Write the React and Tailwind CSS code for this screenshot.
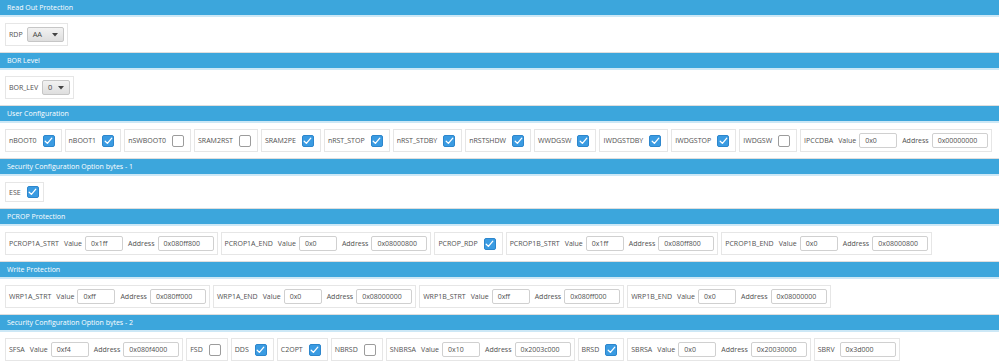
import React from 'react'

const font = { fontFamily: '"Open Sans", "Noto Sans", sans-serif' }

function Header({ title }) {
  return (
    <div className="h-[15px] bg-[#3ca6dc] border-b-2 border-[#cde8f6] box-content flex items-center px-[7px] text-white text-[7px] leading-none">
      {title}
    </div>
  )
}

function Section({ title, children }) {
  return (
    <div>
      <Header title={title} />
      <div className="flex gap-[3px] px-[5px] py-[6px] border-b border-[#dedede] bg-white">
        {children}
      </div>
    </div>
  )
}

function Box({ children, className = '' }) {
  return (
    <div className={`flex items-center border border-[#e6e6e6] pl-[3px] pr-[3px] ${className}`}>
      {children}
    </div>
  )
}

function Check({ on }) {
  return on ? (
    <span className="w-[12px] h-[12px] rounded-[2px] bg-[#3a9be2] border border-[#2d86cc] flex items-center justify-center">
      <svg width="9" height="8" viewBox="0 0 9 8" fill="none">
        <path d="M1.2 4.2L3.4 6.4L7.8 1.2" stroke="white" strokeWidth="1.3" strokeLinecap="round" strokeLinejoin="round" />
      </svg>
    </span>
  ) : (
    <span className="w-[12px] h-[12px] rounded-[2px] bg-white border border-[#9c9c9c]" />
  )
}

function CheckItem({ label, on }) {
  return (
    <Box className="gap-[6px] pr-[6px]">
      <span className="text-[#505050] text-[7px] leading-none">{label}</span>
      <Check on={on} />
    </Box>
  )
}

function Input({ value, w }) {
  return (
    <span className={`${w} h-[15px] border border-[#d0d0d0] rounded-[2px] bg-white flex items-center px-[5px] text-[#505050] text-[7px] leading-none`}>
      {value}
    </span>
  )
}

function ValueItem({ label, value, address }) {
  return (
    <Box className="py-[3px]">
      <span className="text-[#505050] text-[7px] leading-none">{label}</span>
      <span className="ml-[5px] mr-[3px] text-[#505050] text-[7px] leading-none">Value</span>
      <Input value={value} w="w-[38px]" />
      {address !== undefined && (
        <>
          <span className="ml-[5px] mr-[3px] text-[#505050] text-[7px] leading-none">Address</span>
          <Input value={address} w="w-[56px]" />
        </>
      )}
    </Box>
  )
}

function SelectItem({ label, value, w }) {
  return (
    <Box className="py-[3px]">
      <span className="text-[#505050] text-[7px] leading-none mr-[4px]">{label}</span>
      <span className={`${w} h-[15px] border border-[#c6c6c6] rounded-[2px] bg-gradient-to-b from-[#f2f2f2] to-[#dedede] flex items-center justify-between px-[5px] text-[#444] text-[7.5px] leading-none`}>
        {value}
        <svg width="6" height="4" viewBox="0 0 6 4"><path d="M0 0H6L3 3.5Z" fill="#444" /></svg>
      </span>
    </Box>
  )
}

export default function App() {
  return (
    <div className="w-[999px] h-[363px] overflow-hidden bg-white" style={font}>
      <Section title="Read Out Protection">
        <SelectItem label="RDP" value="AA" w="w-[37px]" />
      </Section>
      <Section title="BOR Level">
        <SelectItem label="BOR_LEV" value="0" w="w-[28px]" />
      </Section>
      <Section title="User Configuration">
        <CheckItem label="nBOOT0" on />
        <CheckItem label="nBOOT1" on />
        <CheckItem label="nSWBOOT0" />
        <CheckItem label="SRAM2RST" />
        <CheckItem label="SRAM2PE" on />
        <CheckItem label="nRST_STOP" on />
        <CheckItem label="nRST_STDBY" on />
        <CheckItem label="nRSTSHDW" on />
        <CheckItem label="WWDGSW" on />
        <CheckItem label="IWDGSTDBY" on />
        <CheckItem label="IWDGSTOP" on />
        <CheckItem label="IWDGSW" />
        <ValueItem label="IPCCDBA" value="0x0" address="0x00000000" />
      </Section>
      <Section title="Security Configuration Option bytes - 1">
        <Box className="gap-[6px] pr-[4px] py-[3px]">
          <span className="text-[#505050] text-[7px] leading-none">ESE</span>
          <Check on />
        </Box>
      </Section>
      <Section title="PCROP Protection">
        <ValueItem label="PCROP1A_STRT" value="0x1ff" address="0x080ff800" />
        <ValueItem label="PCROP1A_END" value="0x0" address="0x08000800" />
        <CheckItem label="PCROP_RDP" on />
        <ValueItem label="PCROP1B_STRT" value="0x1ff" address="0x080ff800" />
        <ValueItem label="PCROP1B_END" value="0x0" address="0x08000800" />
      </Section>
      <Section title="Write Protection">
        <ValueItem label="WRP1A_STRT" value="0xff" address="0x080ff000" />
        <ValueItem label="WRP1A_END" value="0x0" address="0x08000000" />
        <ValueItem label="WRP1B_STRT" value="0xff" address="0x080ff000" />
        <ValueItem label="WRP1B_END" value="0x0" address="0x08000000" />
      </Section>
      <Section title="Security Configuration Option bytes - 2">
        <ValueItem label="SFSA" value="0xf4" address="0x080f4000" />
        <CheckItem label="FSD" />
        <CheckItem label="DDS" on />
        <CheckItem label="C2OPT" on />
        <CheckItem label="NBRSD" />
        <ValueItem label="SNBRSA" value="0x10" address="0x2003c000" />
        <CheckItem label="BRSD" on />
        <ValueItem label="SBRSA" value="0x0" address="0x20030000" />
        <Box className="py-[3px]">
          <span className="text-[#505050] text-[7px] leading-none mr-[5px]">SBRV</span>
          <Input value="0x3d000" w="w-[56px]" />
        </Box>
      </Section>
    </div>
  )
}
